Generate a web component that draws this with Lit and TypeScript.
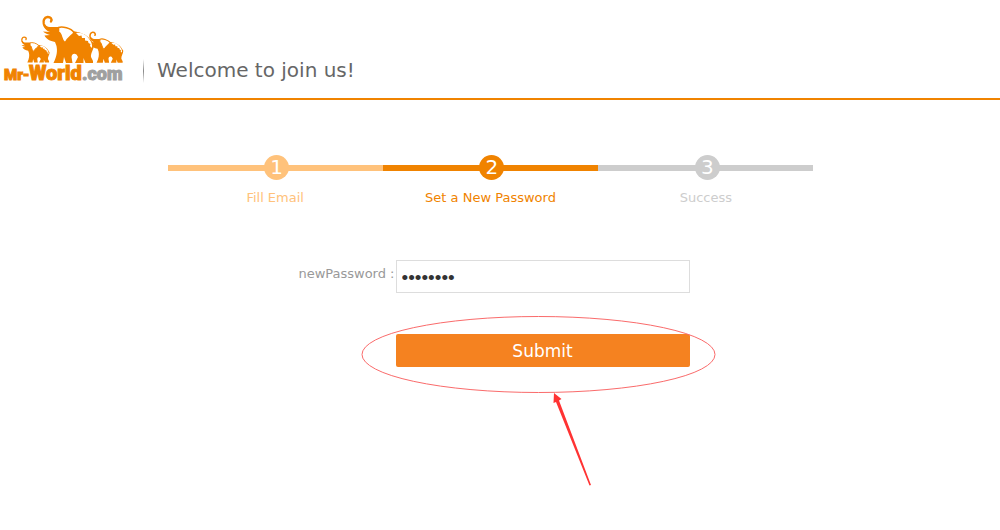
import { LitElement, html, css, svg } from "lit";
import { customElement, state } from "lit/decorators.js";

const steps = [
  { label: "Fill Email", state: "done" },
  { label: "Set a New Password", state: "current" },
  { label: "Success", state: "next" },
];

const elephant = (transform: string) => svg`
  <g transform=${transform}>
    <path fill="none" stroke="#f08300" stroke-width="2.400" stroke-linecap="round"
      d="M9 6.500C10.500 4 8.500 1.800 5.500 2C2 2.500 1 6 1.800 9C3 13 7 14.500 12 15"/>
    <path fill="#f08300"
      d="M1 8C1 13 5 16 8 17L1 16.500C3 18.500 6 19.500 8 20L2.500 20.500C4 24 8 26 13 27L14.500 31C15.500 36 15 41 11.500 48H21L22 42L24 48H30.500L29.500 42C30 39 32 38 34.500 39.500L36 42L33 48H41.500L41.500 43L43.500 48H51V46L49 42C48.500 38 52 34 52 30C49 24 44 18 33 16.500L16 12L8 12C5 12 3 10 1 8Z"/>
    <path fill="#fff" stroke="#f08300" stroke-width="1.600" stroke-linejoin="round"
      d="M16.500 12.500C20 11 29 13 32 17.500C31 20 26 22 23 28C18.500 25 20.500 19 16.500 17Z"/>
    <path fill="#fff"
      d="M34 18C40 17 44.500 20 47.500 24.500C49.500 27 50.500 30 50 33L48 31L48.500 29L46.500 28L46 26L43 25.500L43 23L40 23L39.500 20.500L37 21Z"/>
  </g>
`;

@customElement("app-root")
export class AppRoot extends LitElement {
  static styles = css`
    :host {
      display: block;
      min-height: 100vh;
      background: #fff;
      font-family: Verdana, "DejaVu Sans", sans-serif;
      font-size: 13px;
      line-height: 16px;
    }
    * { box-sizing: border-box; }
    .header {
      display: flex;
      align-items: flex-end;
      padding: 15px 4px 15px;
      border-bottom: 2px solid #f08300;
    }
    .logo { display: block; width: 120px; height: 68px; overflow: visible; }
    .brand {
      font-family: Roboto, "Liberation Sans", sans-serif;
      font-weight: 900;
      fill: #f08300;
      stroke: #f08300;
      stroke-width: 1px;
    }
    .brand-small { font-size: 15px; }
    .brand-large { font-size: 20px; }
    .brand-suffix { font-size: 18px; fill: #9fa0a0; stroke: #9fa0a0; }
    .divider {
      width: 1px;
      height: 24px;
      margin-left: 19px;
      background: linear-gradient(#fff, #888, #fff);
    }
    h1 { margin: 0 0 0 13px; font-size: 20px; line-height: 26px; font-weight: 400; color: #666; }
    .page { padding: 55px 19px 0 0; }
    main { width: 66%; max-width: 646px; margin: 0 auto; }
    .steps {
      display: grid;
      grid-template-columns: repeat(3, 1fr);
      margin: 0;
      padding: 0;
      list-style: none;
    }
    .step { display: flex; flex-direction: column; align-items: center; gap: 10px; }
    .track {
      display: flex;
      justify-content: center;
      align-self: stretch;
      padding-left: 3px;
      background: linear-gradient(currentColor, currentColor) center / 100% 6px no-repeat;
    }
    .dot {
      width: 25px;
      height: 25px;
      border-radius: 50%;
      background: currentColor;
      font-size: 20px;
      line-height: 25px;
      text-align: center;
    }
    .num { color: #fff; }
    .done { color: #ffc27b; }
    .current { color: #f08300; }
    .next { color: #cdcdcd; }
    form {
      display: grid;
      grid-template-columns: 228px minmax(0, 294px);
      row-gap: 41px;
      margin-top: 54px;
    }
    label { padding: 6px 1px 0 0; text-align: right; color: #999; }
    input {
      width: 100%;
      height: 33px;
      padding: 2px 5px 0;
      border: 1px solid #ddd;
      font-family: "Liberation Sans", Arial, sans-serif;
      font-size: 19px;
      color: #333;
      outline: none;
    }
    .action { grid-column: 2; position: relative; }
    button {
      display: block;
      width: 100%;
      height: 33px;
      padding: 0;
      border: 0;
      border-radius: 2px;
      background: #f58220;
      color: #fff;
      font: inherit;
      font-size: 17px;
    }
    .callout {
      position: absolute;
      left: -36px;
      top: -19px;
      width: 356px;
      height: 172px;
      pointer-events: none;
    }
  `;

  @state() private password = "password";

  render() {
    return html`
      <header class="header">
        <svg class="logo" viewBox="4 15 120 68" role="img" aria-label="Mr-World.com">
          ${elephant("translate(21 36) scale(.55)")}
          ${elephant("translate(89 31) scale(.66)")}
          ${elephant("translate(42 15)")}
          <text class="brand brand-small" x="4" y="80">Mr-</text>
          <text class="brand brand-large" x="29" y="80">World</text>
          <text class="brand brand-suffix" x="82" y="80">.com</text>
        </svg>
        <span class="divider"></span>
        <h1>Welcome to join us!</h1>
      </header>
      <div class="page">
        <main>
          <ol class="steps">
            ${steps.map(
              (s, i) => html`
                <li class="step ${s.state}">
                  <div class="track"><span class="dot"><span class="num">${i + 1}</span></span></div>
                  <span>${s.label}</span>
                </li>
              `
            )}
          </ol>
          <form @submit=${(e: Event) => e.preventDefault()}>
            <label for="password">newPassword :</label>
            <input
              id="password"
              type="password"
              .value=${this.password}
              @input=${(e: Event) => (this.password = (e.target as HTMLInputElement).value)}
            />
            <div class="action">
              <button type="submit">Submit</button>
              <svg class="callout" viewBox="0 0 356 172" aria-hidden="true">
                <ellipse cx="178.500" cy="39.500" rx="176.500" ry="38" fill="none" stroke="#fa6b6b" />
                <path fill="#ff3333" d="M194 78L201.500 84L199 85.500L231 170L229.500 170.500L196 87L193.500 88Z" />
              </svg>
            </div>
          </form>
        </main>
      </div>
    `;
  }
}
